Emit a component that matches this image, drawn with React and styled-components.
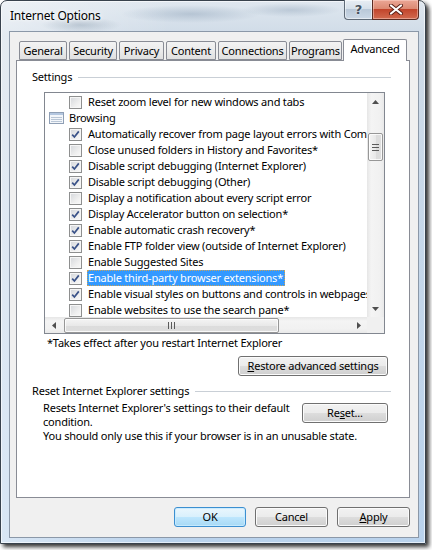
import React from "react";
import styled, { createGlobalStyle } from "styled-components";

const GlobalStyle = createGlobalStyle`
  html, body { margin: 0; padding: 0; background: #ffffff; }
  body {
    font-family: "Noto Sans", "DejaVu Sans", sans-serif;
    font-size: 11px;
    letter-spacing: -0.2px;
    color: #000;
  }
  * { box-sizing: border-box; }
`;

const Page = styled.div`
  width: 432px;
  height: 550px;
  overflow: hidden;
`;

const Window = styled.div`
  width: 426px;
  height: 544px;
  border: 1px solid #38424d;
  border-radius: 7px 7px 0 0;
  box-shadow: 3px 3px 4px rgba(0, 0, 0, 0.8),
    inset 0 0 0 1px rgba(255, 255, 255, 0.6);
  background:
    radial-gradient(ellipse 70px 9px at 190px 13px, rgba(140, 160, 182, 0.45), transparent),
    radial-gradient(ellipse 50px 7px at 290px 9px, rgba(140, 160, 182, 0.4), transparent),
    radial-gradient(ellipse 40px 8px at 80px 24px, rgba(120, 140, 160, 0.35), transparent),
    linear-gradient(90deg, rgba(255, 255, 255, 0.45), rgba(255, 255, 255, 0) 40%),
    linear-gradient(180deg, #dfe7ef 0%, #cfdbe7 35px, #c3d6ea 55%, #b9d2ec 100%);
  display: flex;
  flex-direction: column;
  padding: 0 6px 5px 8px;
`;

const TitleBar = styled.div`
  height: 30px;
  display: flex;
  justify-content: space-between;
  align-items: flex-start;
`;

const Title = styled.div`
  margin: 8px 0 0 1px;
  font-size: 12px;
  line-height: 14px;
  text-shadow: 0 0 6px #fff, 0 0 3px #fff;
`;

const Caption = styled.div`
  display: flex;
  margin: -1px 0 0 0;
`;

const HelpButton = styled.div`
  width: 28px;
  height: 20px;
  border: 1px solid #5f6b78;
  border-top: none;
  border-right: none;
  border-radius: 0 0 0 4px;
  background: linear-gradient(180deg, #e8eef4 0%, #d6e0ea 45%, #b9c8d8 50%, #cbd8e6 100%);
  box-shadow: inset 0 0 0 1px rgba(255, 255, 255, 0.5);
  display: flex;
  align-items: center;
  justify-content: center;
  font-family: "DejaVu Sans", sans-serif;
  font-size: 13px;
  font-weight: bold;
  color: #46525f;
  text-shadow: 0 0 2px #fff;
`;

const CloseButton = styled.div`
  width: 47px;
  height: 20px;
  border: 1px solid #5a2b22;
  border-top: none;
  border-radius: 0 0 4px 0;
  background: linear-gradient(180deg, #eba796 0%, #dc8a73 45%, #c2452c 50%, #d26a4f 100%);
  box-shadow: inset 0 0 0 1px rgba(255, 220, 210, 0.45);
  display: flex;
  align-items: center;
  justify-content: center;
`;

const Client = styled.div`
  width: 410px;
  flex: 1;
  border: 1px solid #8b98a8;
  background: #f0f0f0;
  padding: 7px 8px 0 6px;
  display: flex;
  flex-direction: column;
`;

const TabStrip = styled.div`
  height: 21px;
  display: flex;
  align-items: flex-end;
  padding-left: 3px;
`;

const Tab = styled.div`
  position: relative;
  width: ${(p) => p.$w}px;
  height: ${(p) => (p.$active ? 22 : 19)}px;
  margin: 0 ${(p) => (p.$last ? 0 : 2)}px ${(p) => (p.$active ? -1 : 0)}px
    ${(p) => (p.$active ? -1 : 0)}px;
  z-index: ${(p) => (p.$active ? 1 : 0)};
  border: 1px solid #898c95;
  border-bottom: ${(p) => (p.$active ? "none" : "1px solid #898c95")};
  border-radius: 2px 2px 0 0;
  background: ${(p) =>
    p.$active ? "#ffffff" : "linear-gradient(180deg, #f3f3f3 0%, #ebebeb 50%, #e0e0e0 100%)"};
  display: flex;
  align-items: center;
  justify-content: center;
  padding-bottom: ${(p) => (p.$active ? 4 : 0)}px;
  line-height: 14px;
  white-space: nowrap;
`;

const Panel = styled.div`
  height: 438px;
  border: 1px solid #898c95;
  background: #ffffff;
  display: flex;
  flex-direction: column;
`;

const GroupHeader = styled.div`
  display: flex;
  align-items: center;
  height: 14px;
  line-height: 14px;
  margin: ${(p) => p.$top}px 18px 0 15px;
  white-space: nowrap;
  &::after {
    content: "";
    flex: 1;
    height: 1px;
    margin-left: 6px;
    background: #c9cfd6;
  }
`;

const ListBox = styled.div`
  width: 341px;
  height: 242px;
  margin: 8px 0 0 27px;
  border: 1px solid #828790;
  display: grid;
  grid-template-columns: 1fr 17px;
  grid-template-rows: 1fr 16px;
`;

const Rows = styled.div`
  overflow: hidden;
  padding-top: 1px;
`;

const Row = styled.div`
  height: 16px;
  display: flex;
  align-items: center;
  white-space: nowrap;
  padding-left: ${(p) => (p.$category ? 4 : 24)}px;
`;

const Box = styled.div`
  flex: none;
  width: 13px;
  height: 13px;
  border: 1px solid #8e8f8f;
  background: linear-gradient(135deg, #d3d6da 0%, #eeeeee 60%, #fafafa 100%);
  box-shadow: inset 0 0 0 1px #f6f6f6;
  display: flex;
  align-items: center;
  justify-content: center;
`;

const Label = styled.span`
  height: 16px;
  line-height: 14px;
  margin-left: ${(p) => (p.$category ? 4 : 5)}px;
  border: 1px ${(p) => (p.$selected ? "dotted #c7a25a" : "solid transparent")};
  padding: 0 1px 0 0;
  background: ${(p) => (p.$selected ? "#3399ff" : "transparent")};
  color: ${(p) => (p.$selected ? "#ffffff" : "#000000")};
`;

const VScroll = styled.div`
  display: flex;
  flex-direction: column;
  align-items: center;
  background: linear-gradient(90deg, #e6e6e6 0%, #f4f4f4 25%, #f1f1f1 75%, #e9e9e9 100%);
`;

const HScroll = styled.div`
  display: flex;
  align-items: center;
  background: linear-gradient(180deg, #e6e6e6 0%, #f4f4f4 25%, #f1f1f1 75%, #e9e9e9 100%);
`;

const ArrowCell = styled.div`
  flex: none;
  width: 17px;
  height: ${(p) => (p.$h ? 16 : 17)}px;
  display: flex;
  align-items: center;
  justify-content: center;
  margin-left: ${(p) => (p.$end && p.$h ? "auto" : 0)};
  margin-top: ${(p) => (p.$end && !p.$h ? "auto" : 0)};
`;

const Thumb = styled.div`
  flex: none;
  border: 1px solid #979797;
  border-radius: 2px;
  box-shadow: inset 0 0 0 1px rgba(255, 255, 255, 0.8);
  display: flex;
  align-items: center;
  justify-content: center;
  ${(p) =>
    p.$h
      ? `width: 215px; height: 15px; margin-left: 2px;
         background: linear-gradient(180deg, #f4f4f4 0%, #e9e9e9 50%, #dcdcdc 51%, #dedede 100%);`
      : `width: 15px; height: 28px; margin-top: 23px;
         background: linear-gradient(90deg, #f4f4f4 0%, #e9e9e9 50%, #dcdcdc 51%, #dedede 100%);`}
`;

const Corner = styled.div`
  background: #f0f0f0;
`;

const Note = styled.div`
  margin: 2px 0 0 30px;
  line-height: 14px;
`;

const ButtonRow = styled.div`
  display: flex;
  justify-content: flex-end;
  margin: 6px 21px 0 0;
`;

const Button = styled.div`
  width: ${(p) => p.$w}px;
  height: 20px;
  border: 1px solid ${(p) => (p.$default ? "#3c8fd0" : "#707070")};
  border-radius: 3px;
  background: ${(p) =>
    p.$default
      ? "linear-gradient(180deg, #eaf6fd 0%, #d9f0fc 50%, #bee6fd 51%, #a7d9f5 100%)"
      : "linear-gradient(180deg, #f2f2f2 0%, #ebebeb 50%, #dddddd 51%, #cfcfcf 100%)"};
  box-shadow: inset 0 0 0 1px ${(p) => (p.$default ? "rgba(200,235,255,0.9)" : "#fbfbfb")};
  display: flex;
  align-items: center;
  justify-content: center;
  line-height: 14px;
  white-space: nowrap;
  margin-top: ${(p) => p.$mt || 0}px;
`;

const ResetRow = styled.div`
  display: flex;
  justify-content: space-between;
  align-items: flex-start;
  margin: 3px 21px 0 26px;
`;

const ResetText = styled.div`
  line-height: 14px;
`;

const Para = styled.div`
  margin: 0 0 0 26px;
  line-height: 14px;
`;

const Footer = styled.div`
  display: flex;
  justify-content: flex-end;
  gap: 9px;
  margin-top: 9px;
`;

const Check = () => (
  <svg width="9" height="9" viewBox="0 0 9 9">
    <path d="M1.2 4.6 L3.4 7 L7.8 1.4" fill="none" stroke="#3a5288" strokeWidth="1.7" />
  </svg>
);

const BrowseIcon = () => (
  <svg width="15" height="12" viewBox="0 0 15 12">
    <rect x="0.5" y="0.5" width="14" height="11" fill="#f3f6fa" stroke="#8f9fb5" />
    <rect x="1" y="1" width="13" height="2" fill="#b4c7e0" />
    <path d="M2 5.5h11M2 7.5h11M2 9.5h11" stroke="#b9c6d6" />
  </svg>
);

const Arrow = ({ dir }) => {
  const pts = {
    up: "0,4 3.5,0 7,4",
    down: "0,0 7,0 3.5,4",
    left: "4,0 4,7 0,3.5",
    right: "0,0 4,3.5 0,7",
  }[dir];
  const vert = dir === "up" || dir === "down";
  return (
    <svg width={vert ? 7 : 4} height={vert ? 4 : 7} viewBox={vert ? "0 0 7 4" : "0 0 4 7"}>
      <polygon points={pts} fill="#4f4f4f" />
    </svg>
  );
};

const Grip = ({ h }) =>
  h ? (
    <svg width="7" height="7" viewBox="0 0 7 7">
      <path d="M0.5 0v7M3.5 0v7M6.5 0v7" stroke="#5a5a5a" />
    </svg>
  ) : (
    <svg width="7" height="7" viewBox="0 0 7 7">
      <path d="M0 0.5h7M0 3.5h7M0 6.5h7" stroke="#5a5a5a" />
    </svg>
  );

const tabs = [
  { label: "General", w: 48 },
  { label: "Security", w: 48 },
  { label: "Privacy", w: 45 },
  { label: "Content", w: 50 },
  { label: "Connections", w: 69 },
  { label: "Programs", w: 53 },
  { label: "Advanced", w: 64, active: true },
];

const items = [
  { text: "Reset zoom level for new windows and tabs", checked: false },
  { text: "Browsing", category: true },
  { text: "Automatically recover from page layout errors with Compatibility View", checked: true },
  { text: "Close unused folders in History and Favorites*", checked: false },
  { text: "Disable script debugging (Internet Explorer)", checked: true },
  { text: "Disable script debugging (Other)", checked: true },
  { text: "Display a notification about every script error", checked: false },
  { text: "Display Accelerator button on selection*", checked: true },
  { text: "Enable automatic crash recovery*", checked: true },
  { text: "Enable FTP folder view (outside of Internet Explorer)", checked: true },
  { text: "Enable Suggested Sites", checked: false },
  { text: "Enable third-party browser extensions*", checked: true, selected: true },
  { text: "Enable visual styles on buttons and controls in webpages", checked: true },
  { text: "Enable websites to use the search pane*", checked: false },
];

const App = () => {
  return (
    <Page>
      <GlobalStyle />
      <Window>
        <TitleBar>
          <Title>Internet Options</Title>
          <Caption>
            <HelpButton>?</HelpButton>
            <CloseButton>
              <svg width="14" height="11" viewBox="0 0 14 11">
                <path d="M2 1.5 L12 9.5 M12 1.5 L2 9.5" stroke="#5b2016" strokeWidth="4" strokeLinecap="round" />
                <path d="M2 1.5 L12 9.5 M12 1.5 L2 9.5" stroke="#ffffff" strokeWidth="2.2" strokeLinecap="round" />
              </svg>
            </CloseButton>
          </Caption>
        </TitleBar>
        <Client>
          <TabStrip>
            {tabs.map((t, i) => (
              <Tab key={t.label} $w={t.w} $active={t.active} $last={i === tabs.length - 1}>
                {t.label}
              </Tab>
            ))}
          </TabStrip>
          <Panel>
            <GroupHeader $top={9}>Settings</GroupHeader>
            <ListBox>
              <Rows>
                {items.map((it) =>
                  it.category ? (
                    <Row key={it.text} $category>
                      <BrowseIcon />
                      <Label $category>{it.text}</Label>
                    </Row>
                  ) : (
                    <Row key={it.text}>
                      <Box>{it.checked && <Check />}</Box>
                      <Label $selected={it.selected}>{it.text}</Label>
                    </Row>
                  )
                )}
              </Rows>
              <VScroll>
                <ArrowCell>
                  <Arrow dir="up" />
                </ArrowCell>
                <Thumb>
                  <Grip />
                </Thumb>
                <ArrowCell $end>
                  <Arrow dir="down" />
                </ArrowCell>
              </VScroll>
              <HScroll>
                <ArrowCell $h>
                  <Arrow dir="left" />
                </ArrowCell>
                <Thumb $h>
                  <Grip h />
                </Thumb>
                <ArrowCell $h $end>
                  <Arrow dir="right" />
                </ArrowCell>
              </HScroll>
              <Corner />
            </ListBox>
            <Note>*Takes effect after you restart Internet Explorer</Note>
            <ButtonRow>
              <Button $w={150}>
                <u>R</u>estore advanced settings
              </Button>
            </ButtonRow>
            <GroupHeader $top={8}>Reset Internet Explorer settings</GroupHeader>
            <ResetRow>
              <ResetText>
                Resets Internet Explorer's settings to their default
                <br />
                condition.
              </ResetText>
              <Button $w={86} $mt={2}>
                Re<u>s</u>et...
              </Button>
            </ResetRow>
            <Para>You should only use this if your browser is in an unusable state.</Para>
          </Panel>
          <Footer>
            <Button $w={72} $default>
              OK
            </Button>
            <Button $w={73}>Cancel</Button>
            <Button $w={73}>
              <u>A</u>pply
            </Button>
          </Footer>
        </Client>
      </Window>
    </Page>
  );
};

export default App;
